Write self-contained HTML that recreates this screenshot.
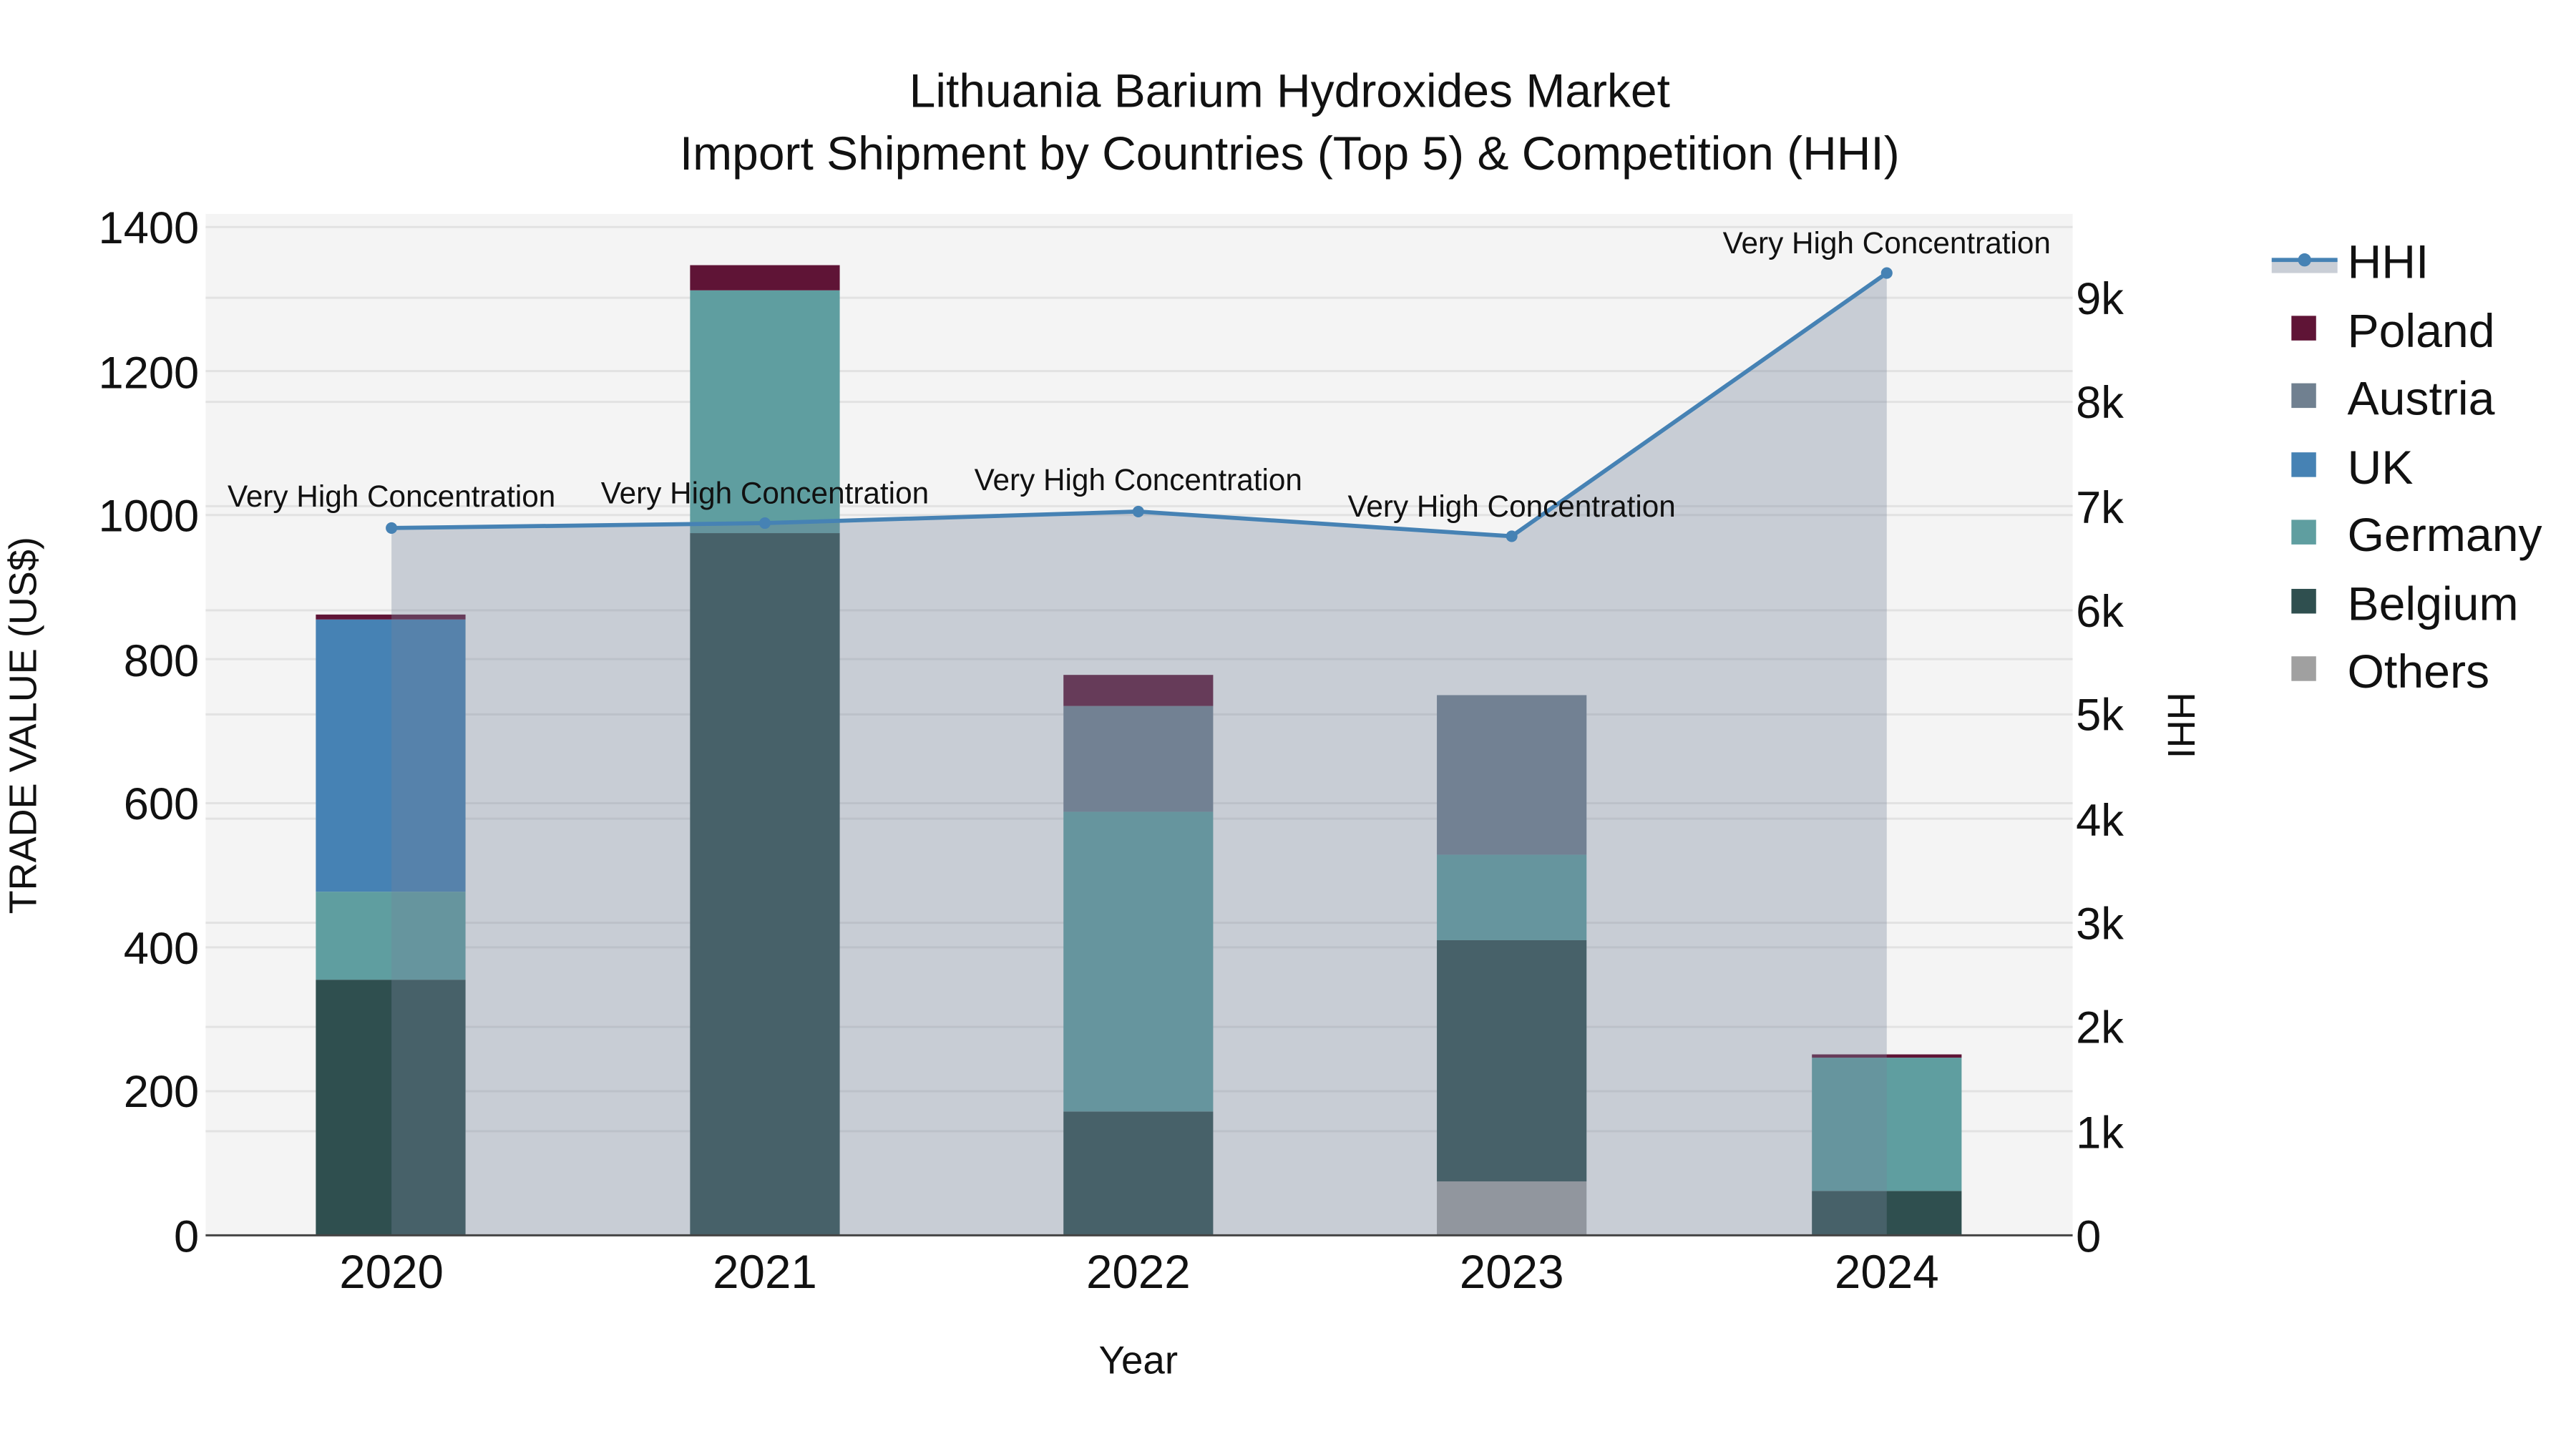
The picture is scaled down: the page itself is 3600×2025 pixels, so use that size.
<!DOCTYPE html>
<html><head><meta charset="utf-8"><style>
html,body{margin:0;padding:0;background:#fff;}
svg{display:block;}
text{font-family:"Liberation Sans",sans-serif;fill:#111;}
</style></head><body>
<svg width="3600" height="2025" viewBox="0 0 1566 880.9" preserveAspectRatio="none" xmlns="http://www.w3.org/2000/svg">
<rect x="0" y="0" width="1566" height="880.9" fill="#fff"/>
<rect x="125" y="130" width="1135" height="621" fill="#f4f4f4"/>
<g stroke="#e2e2e2" stroke-width="1.3">
<line x1="125" x2="1260" y1="663.4" y2="663.4"/>
<line x1="125" x2="1260" y1="575.9" y2="575.9"/>
<line x1="125" x2="1260" y1="488.3" y2="488.3"/>
<line x1="125" x2="1260" y1="400.7" y2="400.7"/>
<line x1="125" x2="1260" y1="313.1" y2="313.1"/>
<line x1="125" x2="1260" y1="225.6" y2="225.6"/>
<line x1="125" x2="1260" y1="138" y2="138"/>
<line x1="125" x2="1260" y1="687.7" y2="687.7"/>
<line x1="125" x2="1260" y1="624.3" y2="624.3"/>
<line x1="125" x2="1260" y1="561" y2="561"/>
<line x1="125" x2="1260" y1="497.7" y2="497.7"/>
<line x1="125" x2="1260" y1="434.3" y2="434.3"/>
<line x1="125" x2="1260" y1="371" y2="371"/>
<line x1="125" x2="1260" y1="307.7" y2="307.7"/>
<line x1="125" x2="1260" y1="244.3" y2="244.3"/>
<line x1="125" x2="1260" y1="181" y2="181"/>
</g>
<g>
<rect x="192" y="595.6" width="91" height="155.4" fill="#2f4f4f"/>
<rect x="192" y="542.1" width="91" height="53.5" fill="#5f9ea0"/>
<rect x="192" y="376.6" width="91" height="165.5" fill="#4682b4"/>
<rect x="192" y="373.6" width="91" height="3" fill="#5f1436"/>
<rect x="419.5" y="324.1" width="91" height="426.9" fill="#2f4f4f"/>
<rect x="419.5" y="176.5" width="91" height="147.6" fill="#5f9ea0"/>
<rect x="419.5" y="161.2" width="91" height="15.3" fill="#5f1436"/>
<rect x="646.5" y="675.7" width="91" height="75.3" fill="#2f4f4f"/>
<rect x="646.5" y="493.5" width="91" height="182.2" fill="#5f9ea0"/>
<rect x="646.5" y="429.2" width="91" height="64.3" fill="#708090"/>
<rect x="646.5" y="410.3" width="91" height="18.9" fill="#5f1436"/>
<rect x="873.5" y="718.2" width="91" height="32.8" fill="#a0a0a0"/>
<rect x="873.5" y="571.6" width="91" height="146.6" fill="#2f4f4f"/>
<rect x="873.5" y="519.6" width="91" height="52" fill="#5f9ea0"/>
<rect x="873.5" y="422.6" width="91" height="97" fill="#708090"/>
<rect x="1101.5" y="724" width="91" height="27" fill="#2f4f4f"/>
<rect x="1101.5" y="643" width="91" height="81" fill="#5f9ea0"/>
<rect x="1101.5" y="641" width="91" height="2" fill="#5f1436"/>
</g>
<polygon points="238,751 238,321 465,318 692,311 919,326 1147,166 1147,751" fill="rgba(117,131,155,0.35)"/>
<polyline points="238,321 465,318 692,311 919,326 1147,166" fill="none" stroke="#4682b4" stroke-width="2.5"/>
<g fill="#4682b4">
<circle cx="238" cy="321" r="3.5"/><circle cx="465" cy="318" r="3.5"/><circle cx="692" cy="311" r="3.5"/><circle cx="919" cy="326" r="3.5"/><circle cx="1147" cy="166" r="3.5"/>
</g>
<g font-size="18.4" text-anchor="middle">
<text x="238" y="308">Very High Concentration</text>
<text x="465" y="306">Very High Concentration</text>
<text x="692" y="298">Very High Concentration</text>
<text x="919" y="314">Very High Concentration</text>
<text x="1147" y="154">Very High Concentration</text>
</g>
<line x1="125" x2="1260" y1="751" y2="751" stroke="#444" stroke-width="1.3"/>
<g font-size="27.5" text-anchor="end">
<text x="121" y="761">0</text>
<text x="121" y="673">200</text>
<text x="121" y="586">400</text>
<text x="121" y="498">600</text>
<text x="121" y="411">800</text>
<text x="121" y="323">1000</text>
<text x="121" y="236">1200</text>
<text x="121" y="148">1400</text>
</g>
<g font-size="27.5">
<text x="1262" y="761">0</text>
<text x="1262" y="698">1k</text>
<text x="1262" y="634">2k</text>
<text x="1262" y="571">3k</text>
<text x="1262" y="508">4k</text>
<text x="1262" y="444">5k</text>
<text x="1262" y="381">6k</text>
<text x="1262" y="318">7k</text>
<text x="1262" y="254">8k</text>
<text x="1262" y="191">9k</text>
</g>
<g font-size="28.5" text-anchor="middle">
<text x="238" y="783">2020</text>
<text x="465" y="783">2021</text>
<text x="692" y="783">2022</text>
<text x="919" y="783">2023</text>
<text x="1147" y="783">2024</text>
</g>
<text x="692" y="835" font-size="23.8" text-anchor="middle">Year</text>
<text transform="translate(22,441) rotate(-90)" font-size="23.5" text-anchor="middle">TRADE VALUE (US$)</text>
<text transform="translate(1318,441) rotate(90)" font-size="23.5" text-anchor="middle">HHI</text>
<g font-size="28.7" text-anchor="middle">
<text x="784" y="65">Lithuania Barium Hydroxides Market</text>
<text x="784" y="103">Import Shipment by Countries (Top 5) &amp; Competition (HHI)</text>
</g>
<rect x="1381" y="158" width="40" height="8" fill="#c9ced6"/>
<line x1="1381" x2="1421" y1="158" y2="158" stroke="#4682b4" stroke-width="2.5"/>
<circle cx="1401" cy="158" r="4" fill="#4682b4"/>
<g>
<rect x="1393" y="192" width="15" height="15" fill="#5f1436"/>
<rect x="1393" y="233" width="15" height="15" fill="#708090"/>
<rect x="1393" y="275" width="15" height="15" fill="#4682b4"/>
<rect x="1393" y="316" width="15" height="15" fill="#5f9ea0"/>
<rect x="1393" y="358" width="15" height="15" fill="#2f4f4f"/>
<rect x="1393" y="399" width="15" height="15" fill="#a0a0a0"/>
</g>
<g font-size="28.8">
<text x="1427" y="169">HHI</text>
<text x="1427" y="211">Poland</text>
<text x="1427" y="252">Austria</text>
<text x="1427" y="294">UK</text>
<text x="1427" y="335">Germany</text>
<text x="1427" y="377">Belgium</text>
<text x="1427" y="418">Others</text>
</g>
</svg>
</body></html>
